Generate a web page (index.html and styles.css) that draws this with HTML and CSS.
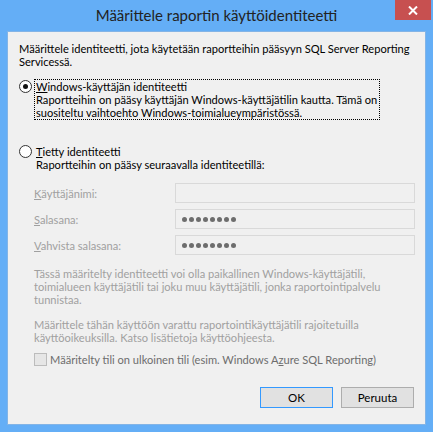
FILE: index.html
```html
<!DOCTYPE html>
<html lang="fi">
<head>
    <meta charset="UTF-8">
    <title>Määrittele raportin käyttöidentiteetti</title>
    <link rel="stylesheet" href="styles.css">
</head>
<body>

    <div class="window">
        <div class="titlebar">
            <span></span>
            <div class="title">Määrittele raportin käyttöidentiteetti</div>
            <div class="close">
                <svg width="10" height="9" viewBox="0 0 10 9">
                    <path d="M1 0.5 L9 8.5 M9 0.5 L1 8.5" stroke="#fff" stroke-width="2"/>
                </svg>
            </div>
        </div>

        <div class="client">
            <p class="intro">Määrittele identiteetti, jota käytetään raportteihin pääsyyn SQL Server Reporting<br>Servicessä.</p>

            <!-- vaihtoehto 1 -->
            <div class="option">
                <span class="radio checked"></span>
                <div class="option-text focused">
                    <u>W</u>indows-käyttäjän identiteetti<br>
                    Raportteihin on pääsy käyttäjän Windows-käyttäjätilin kautta. Tämä on<br>
                    suositeltu vaihtoehto Windows-toimialueympäristössä.
                </div>
            </div>

            <!-- vaihtoehto 2 -->
            <div class="option second">
                <span class="radio"></span>
                <div class="option-text">
                    <u>T</u>ietty identiteetti<br>
                    Raportteihin on pääsy seuraavalla identiteetillä:
                </div>
            </div>

            <div class="fields">
                <label><u>K</u>äyttäjänimi:</label>
                <div class="box"></div>
                <label><u>S</u>alasana:</label>
                <div class="box"><span class="dots"><i></i><i></i><i></i><i></i><i></i><i></i><i></i><i></i></span></div>
                <label><u>V</u>ahvista salasana:</label>
                <div class="box"><span class="dots"><i></i><i></i><i></i><i></i><i></i><i></i><i></i><i></i></span></div>
            </div>

            <p class="note">Tässä määritelty identiteetti voi olla paikallinen Windows-käyttäjätili,<br>toimialueen käyttäjätili tai joku muu käyttäjätili, jonka raportointipalvelu<br>tunnistaa.</p>
            <p class="note">Määrittele tähän käyttöön varattu raportointikäyttäjätili rajoitetuilla<br>käyttöoikeuksilla. Katso lisätietoja käyttöohjeesta.</p>

            <div class="check">
                <span class="checkbox"></span>
                <span>Määritelty tili on ulkoinen tili (esim. Windows A<u>z</u>ure SQL Reporting)</span>
            </div>

            <div class="buttons">
                <button class="btn default">OK</button>
                <button class="btn">Peruuta</button>
            </div>
        </div>
    </div>

</body>
</html>
```

FILE: styles.css
```css
body {
    margin: 0;
    padding: 0;
    font-family: Lato, "Noto Sans", sans-serif;
    font-size: 11.1px;
    line-height: 13px;
    color: #000;
}
.window {
    width: 433px;
    height: 432px;
    background-color: #64aef6;
    box-sizing: border-box;
    padding-bottom: 7px;
    display: flex;
    flex-direction: column;
}
.titlebar {
    height: 31px;
    display: grid;
    grid-template-columns: 1fr auto 1fr;
    align-items: start;
}
.title {
    font-size: 15px;
    line-height: 31px;
    color: #222;
}
.close {
    justify-self: end;
    margin-right: 2px;
    width: 36px;
    height: 20px;
    background-color: #c75050;
    display: flex;
    justify-content: center;
    align-items: center;
}
.client {
    flex: 1;
    margin: 0 7px;
    background-color: #f0f0f0;
    border: 1px solid #83b4e6;
    padding: 10px 11px 0 11px;
    display: flex;
    flex-direction: column;
    white-space: nowrap;
}
.client p {
    margin: 0;
}
.intro {
    margin-bottom: 12px !important;
}
.option {
    display: flex;
    align-items: flex-start;
}
.option.second {
    margin-top: 25px;
}
.radio {
    width: 11px;
    height: 11px;
    border: 1px solid #333;
    border-radius: 50%;
    background-color: #fff;
    margin-right: 2px;
    flex-shrink: 0;
    display: flex;
    justify-content: center;
    align-items: center;
}
.radio.checked::after {
    content: "";
    width: 5px;
    height: 5px;
    border-radius: 50%;
    background-color: #111;
}
.option-text {
    padding: 0 1px;
    border: 1px dotted transparent;
    margin-top: -1px;
    width: 342px;
}
.option-text.focused {
    border-color: #000;
}
.fields {
    display: grid;
    grid-template-columns: 141px 240px;
    row-gap: 6px;
    align-items: center;
    margin: 11px 0 0 15px;
    color: #a0a0a0;
}
.box {
    height: 18px;
    border: 1px solid #d9d9d9;
    background-color: #f0f0f0;
    display: flex;
    align-items: center;
    padding-left: 6px;
}
.dots {
    display: flex;
    gap: 2px;
}
.dots i {
    width: 5px;
    height: 5px;
    border-radius: 50%;
    background-color: #6d6d6d;
}
.note {
    color: #a0a0a0;
    margin: 12px 0 0 15px !important;
}
.check {
    display: flex;
    align-items: center;
    margin: 9px 0 0 15px;
    color: #6d6d6d;
}
.checkbox {
    width: 11px;
    height: 11px;
    border: 1px solid #bcbcbc;
    background-color: #e6e6e6;
    margin-right: 3px;
}
.buttons {
    display: flex;
    justify-content: flex-end;
    gap: 8px;
    margin-top: 21px;
}
.btn {
    width: 73px;
    height: 21px;
    font-family: inherit;
    font-size: 11.5px;
    border: 1px solid #adadad;
    background-color: #e1e1e1;
    color: #000;
    padding: 0;
}
.btn.default {
    border-color: #3399ff;
}
```
